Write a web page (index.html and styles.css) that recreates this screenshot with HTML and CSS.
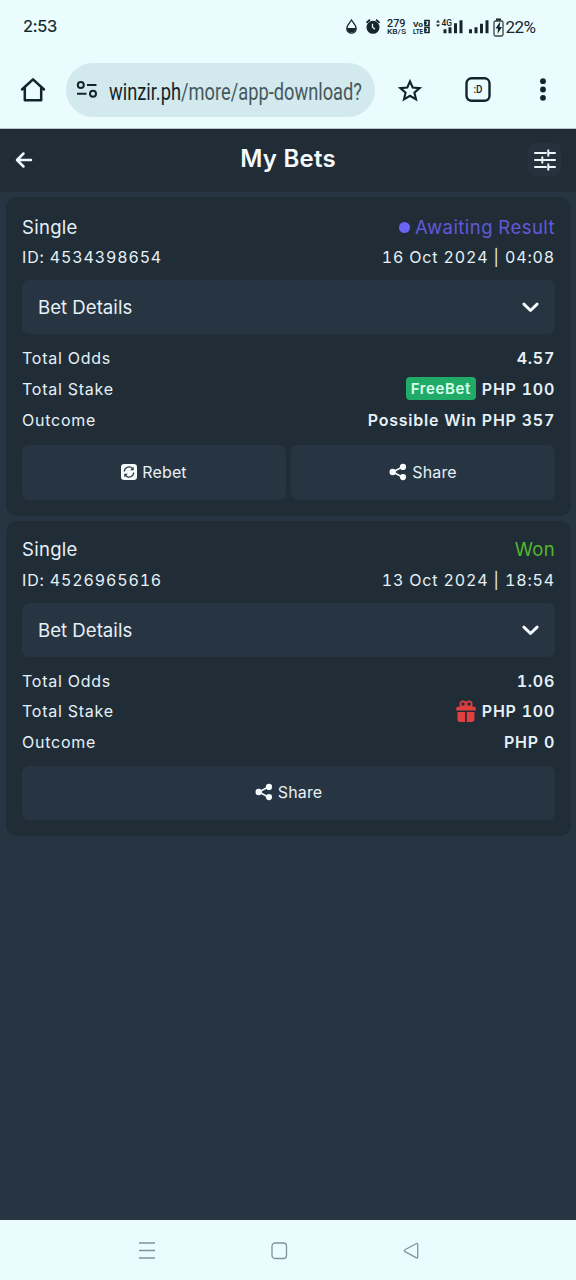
FILE: index.html
```html
<!DOCTYPE html>
<html lang="en">
<head>
<meta charset="utf-8">
<meta name="viewport" content="width=device-width">
<title>My Bets</title>
<link rel="stylesheet" href="styles.css">
</head>
<body>
<svg class="defs" width="0" height="0" aria-hidden="true">
  <symbol id="share" viewBox="0 0 18 18">
    <path d="M14 3.500 4 9l10 5.500" fill="none" stroke="currentColor" stroke-width="1.500"/>
    <circle cx="14" cy="3.900" r="3.100"/><circle cx="3.700" cy="9" r="3.200"/><circle cx="14" cy="14.100" r="3.100"/>
  </symbol>
  <symbol id="chevron" viewBox="0 0 16 10">
    <path d="M1.800 1.800 8 7.800l6.200-6" fill="none" stroke="currentColor" stroke-width="2.700" stroke-linecap="round" stroke-linejoin="round"/>
  </symbol>
</svg>
<div class="screen">
  <div class="status">
    <span class="clock">2:53</span>
    <svg class="status-icons" width="192" height="24" viewBox="0 0 192 24">
      <path d="M6.500 6C4.500 9 1.800 11.300 1.800 14.500a4.700 4.700 0 0 0 9.400 0c0-3.200-2.700-5.500-4.700-8.500z" fill="none" stroke="#16262b" stroke-width="1.300"/>
      <path d="M2 14h9a4.500 4.500 0 0 1-9 0z"/>
      <circle cx="28" cy="13.300" r="6.500"/>
      <path d="m21.500 8.800 3.500-3M34.500 8.800 31 5.800" stroke="#16262b" stroke-width="1.800"/>
      <path d="M27.500 9.800v3.500l2.500 2" fill="none" stroke="#dff5f8" stroke-width="1.300"/>
      <text class="rate" x="42" y="13" textLength="18.500" lengthAdjust="spacingAndGlyphs">279</text>
      <text class="unit" x="42" y="20" textLength="19" lengthAdjust="spacingAndGlyphs">KB/S</text>
      <text class="volte" x="68" y="12.500" textLength="10" lengthAdjust="spacingAndGlyphs">Vo</text>
      <text class="volte" x="68" y="19.500" textLength="10" lengthAdjust="spacingAndGlyphs">LTE</text>
      <path d="M80 6.500h4v5h-4zM80 13.500h4v5h-4zM79 9h3M79 16h3" fill="none" stroke="#16262b" stroke-width="1.600"/>
      <path d="m91 8.500 2-2.500 2 2.500zM91 10.500l2 2.500 2-2.500z"/>
      <text class="net" x="96.500" y="12" textLength="10.500" lengthAdjust="spacingAndGlyphs">4G</text>
      <path d="M98.500 15.300h3v4h-3zM103.500 13.300h3v6h-3zM109 9.300h3v10h-3zM114.500 6.300h3v13h-3zM124 15.300h3v4h-3zM129.500 13.300h3v6h-3zM135 9.800h3v9.500h-3zM140.500 6.300h3v13h-3z"/>
      <rect x="149" y="7" width="9" height="15" rx="1.500" fill="none" stroke="#34454b" stroke-width="1.300"/>
      <path d="M151 4.500h5v2h-5zM154.500 8.500l-4 6h2.500l-.5 5.500 4.500-7h-2.500l.8-4.500z"/>
      <text class="pct" x="160.500" y="19.300" textLength="30.500" lengthAdjust="spacing">22%</text>
    </svg>
  </div>
  <div class="browser">
    <svg class="home" width="26" height="26" viewBox="0 0 26 26" fill="none" stroke="#14252a" stroke-width="2.500" stroke-linejoin="round" stroke-linecap="round"><path d="M2 12.500 13 2.300l11 10.200M4.800 11v12.300h16.400V11"/></svg>
    <div class="url">
      <svg width="22" height="20" viewBox="0 0 22 20" fill="none" stroke="#14252a" stroke-width="2"><circle cx="4.800" cy="5" r="3"/><path d="M11 5h9.500M1 13.800h9.500"/><circle cx="17" cy="13.800" r="3"/></svg>
      <svg class="address" width="258" height="40" viewBox="0 0 258 40"><text x="0" y="29.500" textLength="253" lengthAdjust="spacingAndGlyphs"><tspan class="host">winzir.ph</tspan>/more/app-download?</text></svg>
    </div>
    <svg class="star" width="24" height="24" viewBox="0 0 24 24" fill="none" stroke="#14252a" stroke-width="2.100"><path d="m12 3.300 2.700 6.200 6.900.6-5.200 4.500 1.600 6.700-6-3.500-6 3.500 1.600-6.700L2.400 10.100l6.900-.6z"/></svg>
    <svg class="tabs" width="26" height="26" viewBox="0 0 26 26"><rect x="1.500" y="1.300" width="23" height="22.500" rx="5" fill="none" stroke="#14252a" stroke-width="2.400"/><text x="8.500" y="15.500" textLength="9" lengthAdjust="spacingAndGlyphs">:D</text></svg>
    <svg class="dots" width="8" height="24" viewBox="0 0 8 24"><circle cx="4" cy="3.200" r="2.900"/><circle cx="4" cy="11.500" r="2.900"/><circle cx="4" cy="19.800" r="2.900"/></svg>
  </div>
  <header class="header">
    <svg class="back" width="18" height="18" viewBox="0 0 18 18" fill="none" stroke="#f1f8fb" stroke-width="2.500" stroke-linecap="round" stroke-linejoin="round"><path d="M16 9H2.200M8.500 2.500 2 9l6.500 6.500"/></svg>
    <h1>My Bets</h1>
    <div class="filter"><svg width="22" height="22" viewBox="0 0 22 22" fill="none" stroke="#edf7fb" stroke-width="2" stroke-linecap="round"><path d="M1 4h11M14.300 4H21M14.300 1.200v5.600M1 11h5.500M8.300 11H21M8.300 8.200v5.600M1 18h11M14.300 18H21M14.300 15.200v5.600"/></svg></div>
  </header>
  <main>
    <section class="card">
      <div class="row kind"><span>Single</span><span class="awaiting"><i></i>Awaiting Result</span></div>
      <div class="row meta"><span>ID: 4534398654</span><span>16 Oct 2024 | 04:08</span></div>
      <div class="details"><span>Bet Details</span><svg width="17" height="11"><use href="#chevron"/></svg></div>
      <div class="row"><span>Total Odds</span><b>4.57</b></div>
      <div class="row"><span>Total Stake</span><b><em>FreeBet</em>PHP 100</b></div>
      <div class="row"><span>Outcome</span><b>Possible Win PHP 357</b></div>
      <div class="actions">
        <div class="btn"><svg width="16" height="16" viewBox="0 0 17 17"><rect width="17" height="17" rx="3.500"/><path d="M3.500 8a5 5 0 0 1 8.700-3.200M13.500 9a5 5 0 0 1-8.700 3.200" fill="none" stroke="#263541" stroke-width="1.300"/><path d="M13.500 3v3.700H9.800zM3.500 14v-3.700h3.700z" fill="#263541"/></svg>Rebet</div>
        <div class="btn"><svg width="18" height="18"><use href="#share"/></svg>Share</div>
      </div>
    </section>
    <section class="card won">
      <div class="row kind"><span>Single</span><span class="green">Won</span></div>
      <div class="row meta"><span>ID: 4526965616</span><span>13 Oct 2024 | 18:54</span></div>
      <div class="details"><span>Bet Details</span><svg width="17" height="11"><use href="#chevron"/></svg></div>
      <div class="row"><span>Total Odds</span><b>1.06</b></div>
      <div class="row"><span>Total Stake</span><b><svg class="gift" width="20" height="23" viewBox="0 0 20 23"><path d="M2.500 6.500h15a2.300 2.300 0 0 1 2.300 2.300v1.700H.2V8.800a2.300 2.300 0 0 1 2.300-2.300zM1.500 12h7.600v10H4a2.500 2.500 0 0 1-2.500-2.500zM10.800 12h7.600v7.500A2.500 2.500 0 0 1 16 22h-5.200z"/><g fill="none" stroke="#e0403f" stroke-width="1.800"><circle cx="7" cy="4" r="2.700"/><circle cx="13" cy="4" r="2.700"/></g></svg>PHP 100</b></div>
      <div class="row"><span>Outcome</span><b>PHP 0</b></div>
      <div class="actions"><div class="btn"><svg width="18" height="18"><use href="#share"/></svg>Share</div></div>
    </section>
  </main>
  <nav class="nav">
    <svg width="18" height="20" viewBox="0 0 18 20"><path d="M1 2h16M1 9.500h16M1 17h16"/></svg>
    <svg width="18" height="20" viewBox="0 0 18 20"><rect x="2" y="2" width="14.500" height="15.500" rx="3"/></svg>
    <svg width="18" height="20" viewBox="0 0 18 20"><path d="M14.500 2.500 3 8.800q-1.500.9 0 1.800l11.500 6.300q1.200.4 1.200-.9V3.400q0-1.300-1.200-.9z"/></svg>
  </nav>
</div>
</body>
</html>
```
FILE: styles.css
```css
* { box-sizing: border-box; }
body { margin: 0; background: #263541; font-family: Inter, "Noto Sans", sans-serif; }
.defs { position: absolute; }
svg { display: block; flex: none; }
.screen { width: 576px; height: 1280px; display: flex; flex-direction: column; }

.status { height: 52px; background: #ebfcff; display: flex; justify-content: space-between; align-items: center; padding: 0 39px 0 23px; }
.clock { font: 400 16.500px Inter, sans-serif; color: #14252a; letter-spacing: -0.300px; -webkit-text-stroke: 0.200px #14252a; }
.status-icons { fill: #16262b; font-family: Roboto, sans-serif; }
.rate { font-size: 10.500px; font-weight: 500; }
.unit { font-size: 8px; font-weight: 500; }
.volte { font-size: 8px; font-weight: 700; }
.net { font-size: 9px; font-weight: 500; }
.pct { font-size: 17px; }

.browser { height: 77px; background: #ebfcff; border-bottom: 1px solid #b4c5cb; display: flex; align-items: center; padding: 0 29px 1px 20px; }
.url { width: 309px; height: 54px; margin-left: 20px; border-radius: 27px; background: #d2e9ed; display: flex; align-items: center; padding-left: 10px; }
.address { margin-left: 11px; fill: #46585d; font: 400 23px Roboto, sans-serif; }
.host { fill: #14252a; }
.star { margin-left: 23px; }
.tabs { margin-left: 43px; fill: #14252a; font: 500 11px Roboto, sans-serif; }
.dots { margin-left: auto; fill: #14252a; }

.header { height: 63px; background: #202d37; color: #f5fafd; display: grid; grid-template-columns: 33px 1fr 33px; align-items: center; padding: 0 15px 2px; }
.header h1 { margin: 0; font-size: 24px; line-height: 30px; font-weight: 600; letter-spacing: 0.250px; text-align: center; padding-bottom: 1px; }
.filter { width: 33px; height: 33px; border-radius: 7px; background: #25313c; display: grid; place-items: center; }

main { flex: 1; padding: 5px 5px 0 6px; display: flex; flex-direction: column; gap: 5px; background: #263541; }
.card { height: 319px; background: #202d37; border-radius: 11px; padding: 15px 16px 16px; color: #e6f0f6; font-size: 16px; letter-spacing: 0.750px; font-variant-numeric: tabular-nums; display: flex; flex-direction: column; }
.row { height: 31px; padding-bottom: 2px; display: flex; justify-content: space-between; align-items: center; white-space: nowrap; }
.kind { height: 30px; padding-bottom: 0; font-size: 18.500px; letter-spacing: 0.300px; }
.meta { letter-spacing: 0.850px; }
.row b { font-weight: 600; display: flex; align-items: center; }
.row em { font-style: normal; font-size: 15px; line-height: 23px; background: #20ab69; color: #d9ffed; border-radius: 4px; padding: 0 5px; margin-right: 6px; letter-spacing: 0.600px; }
.awaiting { color: #6159d8; letter-spacing: 0.450px; display: flex; align-items: center; }
.awaiting i { width: 11px; height: 11px; border-radius: 50%; background: #6b63f5; margin-right: 5px; }
.green { color: #55b62c; }
.details { height: 54px; margin: 7px 0 9px; border-radius: 7px; background: #263541; padding: 0 16px; display: flex; justify-content: space-between; align-items: center; font-size: 18.600px; letter-spacing: 0.050px; }
.actions { margin-top: 9px; display: flex; gap: 5px; }
.btn { flex: 1; height: 55px; padding-bottom: 2px; border-radius: 7px; background: #263541; display: flex; align-items: center; justify-content: center; gap: 5px; font-size: 16px; letter-spacing: 0.150px; }
.btn svg, .details svg { fill: #f6fbfd; color: #f6fbfd; }
.gift { fill: #e0403f; margin-right: 6px; }
.won { height: 315px; padding-top: 14px; padding-bottom: 15px; }
.won .row { height: 30.300px; padding-bottom: 0; }
.won .kind, .won .meta { height: 30px; }
.won .kind { padding-bottom: 2px; }
.won .details { margin-top: 8px; }
.won .btn { height: 54px; }

.nav { height: 60px; background: #ebfcff; display: flex; justify-content: space-between; align-items: center; padding: 2px 156px 0 138px; fill: none; stroke: #819398; stroke-width: 1.300; }
```
